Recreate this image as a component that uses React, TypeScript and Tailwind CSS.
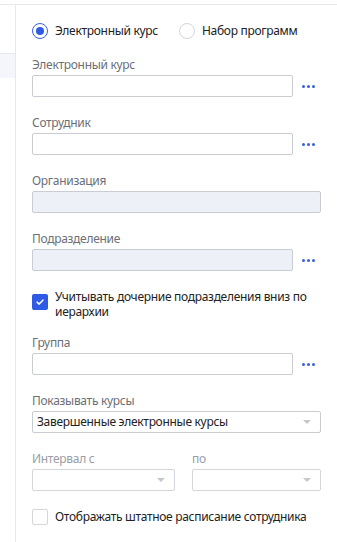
import * as React from 'react';

const Dots = () => (
  <button type="button" className="flex w-[28px] shrink-0 items-center justify-center gap-[2px] pl-[2px]">
    <span className="h-[3px] w-[3px] rounded-full bg-[#3a5fe0]" />
    <span className="h-[3px] w-[3px] rounded-full bg-[#3a5fe0]" />
    <span className="h-[3px] w-[3px] rounded-full bg-[#3a5fe0]" />
  </button>
);

const Caret = () => (
  <span className="mr-[9px] h-0 w-0 border-x-[4px] border-t-[4px] border-x-transparent border-t-[#c4c7cc]" />
);

interface FieldProps {
  label: string;
  disabled?: boolean;
  picker?: boolean;
  className?: string;
}

const Field = ({ label, disabled, picker, className }: FieldProps) => (
  <div className={className}>
    <div className="h-4 text-[12px] leading-4 text-[#6b6f76]">{label}</div>
    <div className="mt-[2px] flex">
      <div
        className={
          'h-[22px] flex-1 rounded-[2px] border border-[#c9ccd2] ' +
          (disabled ? 'bg-[#eef0f8]' : 'bg-white')
        }
      />
      {picker && <Dots />}
    </div>
  </div>
);

export default function App() {
  return (
    <div
      className="h-[542px] w-[337px] overflow-hidden bg-white pt-1 tracking-[-0.3px] text-[#222]"
      style={{ fontFamily: '"Noto Sans", "Open Sans", sans-serif' }}
    >
      <div className="flex h-full border-t border-[#e6e8ee]">
        {/* left rail */}
        <div className="w-4 shrink-0 border-r border-[#e6e8ee]">
          <div className="mt-[48px] h-[25px] border-t border-[#e6e8ee] bg-[#f4f6fb]" />
        </div>

        <div className="flex-1 pl-4 pr-4">
          {/* radios */}
          <div className="mt-[18px] flex h-4 items-center whitespace-nowrap text-[12px]">
            <span className="flex h-4 w-4 shrink-0 items-center justify-center rounded-full border-[1.5px] border-[#3a5fe0]">
              <span className="h-2 w-2 rounded-full bg-[#2f5be4]" />
            </span>
            <span className="ml-[7px]">Электронный курс</span>
            <span className="ml-[21px] h-4 w-4 shrink-0 rounded-full border border-[#d3d6dc]" />
            <span className="ml-[7px]">Набор программ</span>
          </div>

          <Field className="mt-[18px]" label="Электронный курс" picker />
          <Field className="mt-[18px]" label="Сотрудник" picker />
          <Field className="mt-[18px]" label="Организация" disabled />
          <Field className="mt-[18px]" label="Подразделение" disabled picker />

          {/* include children */}
          <label className="mt-[18px] flex items-start">
            <span className="mt-[5px] flex h-4 w-4 shrink-0 items-center justify-center rounded-[2px] bg-[#2f5be4]">
              <svg viewBox="0 0 12 12" className="h-[10px] w-[10px]">
                <path d="M2.5 6.2 5 8.5 9.5 3.8" fill="none" stroke="white" strokeWidth="1.8" strokeLinecap="round" strokeLinejoin="round" />
              </svg>
            </span>
            <span className="ml-[7px] text-[12px] leading-[15px]">
              Учитывать дочерние подразделения вниз по иерархии
            </span>
          </label>

          <Field className="mt-[16px]" label="Группа" picker />

          {/* show courses */}
          <div className="mt-[18px]">
            <div className="h-4 text-[12px] leading-4 text-[#6b6f76]">Показывать курсы</div>
            <div className="mt-[2px] flex h-[22px] items-center justify-between rounded-[2px] border border-[#c9ccd2] pl-[4px] text-[12px]">
              <span>Завершенные электронные курсы</span>
              <Caret />
            </div>
          </div>

          {/* interval */}
          <div className="mt-[18px] flex gap-[17px]">
            <div className="w-[143px]">
              <div className="h-4 text-[12px] leading-4 text-[#9a9da3]">Интервал с</div>
              <div className="mt-[2px] flex h-[22px] items-center justify-end rounded-[2px] border border-[#d3d6dc]">
                <Caret />
              </div>
            </div>
            <div className="flex-1">
              <div className="h-4 text-[12px] leading-4 text-[#9a9da3]">по</div>
              <div className="mt-[2px] flex h-[22px] items-center justify-end rounded-[2px] border border-[#d3d6dc]">
                <Caret />
              </div>
            </div>
          </div>

          {/* staff schedule */}
          <label className="mt-[18px] flex items-center">
            <span className="h-4 w-4 shrink-0 rounded-[2px] border border-[#d3d6dc]" />
            <span className="ml-[7px] whitespace-nowrap text-[12px] leading-4">
              Отображать штатное расписание сотрудника
            </span>
          </label>
        </div>
      </div>
    </div>
  );
}
